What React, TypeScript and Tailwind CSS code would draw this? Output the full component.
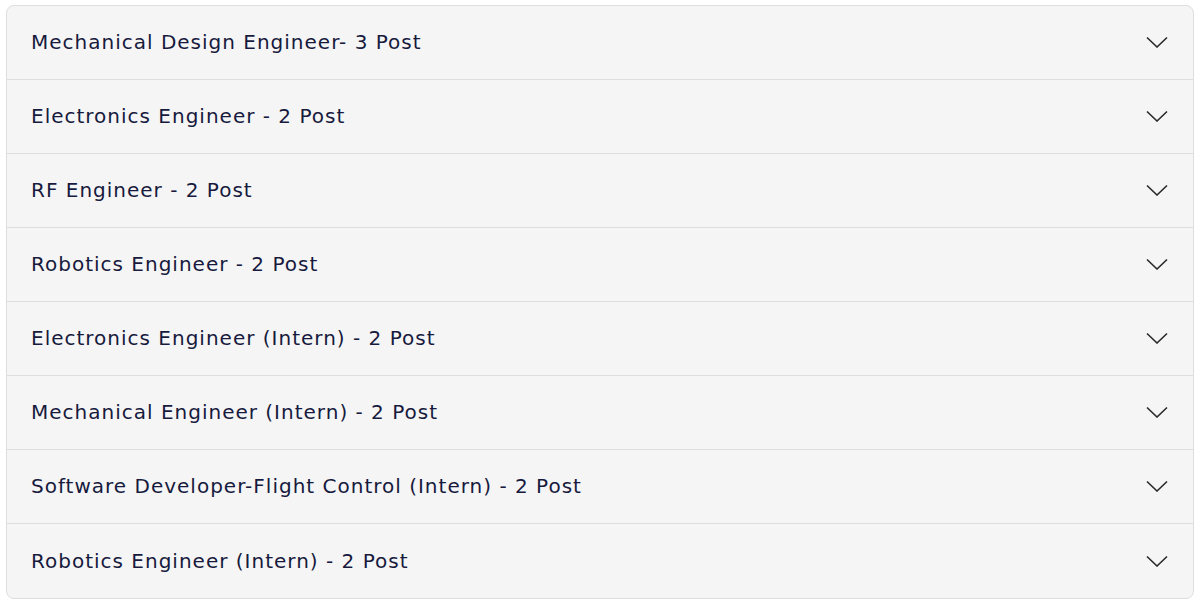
const posts = [
  "Mechanical Design Engineer- 3 Post",
  "Electronics Engineer - 2 Post",
  "RF Engineer - 2 Post",
  "Robotics Engineer - 2 Post",
  "Electronics Engineer (Intern) - 2 Post",
  "Mechanical Engineer (Intern) - 2 Post",
  "Software Developer-Flight Control (Intern) - 2 Post",
  "Robotics Engineer (Intern) - 2 Post",
];

function Chevron() {
  return (
    <svg width="22" height="12" viewBox="0 0 22 12" fill="none" className="text-[#2a2a2a]">
      <polyline points="1,1.5 11,11 21,1.5" stroke="currentColor" strokeWidth="1.6" />
    </svg>
  );
}

export default function App() {
  return (
    <div className="min-h-screen bg-white px-[6px] pt-[5px] font-['DejaVu_Sans',sans-serif]">
      <div className="overflow-hidden rounded-lg border border-[#dedede] bg-[#f5f5f5]">
        {posts.map((p, i) => (
          <button
            key={p}
            type="button"
            className={`flex h-[74px] w-full items-center justify-between pb-px pl-6 pr-[25px] text-left ${
              i < posts.length - 1 ? "border-b border-[#dedede]" : ""
            }`}
          >
            <span className="text-[20px] tracking-[1px] text-[#171a3d]">{p}</span>
            <Chevron />
          </button>
        ))}
      </div>
    </div>
  );
}
